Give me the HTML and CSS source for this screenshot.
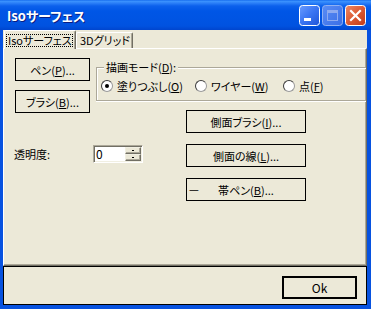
FILE: index.html
```html
<!DOCTYPE html>
<html lang="ja">
<head>
<meta charset="utf-8">
<link rel="stylesheet" href="styles.css">
</head>
<body>
<div class="window">
  <div class="titlebar">
    <span class="title">Isoサーフェス</span>
    <div class="tb-buttons">
      <svg class="tb-btn" width="21" height="21" viewBox="0 0 21 21">
        <defs><linearGradient id="gmin" x1="0" y1="0" x2="1" y2="1"><stop offset="0" stop-color="#6A9CFF"/><stop offset="0.5" stop-color="#3A74F2"/><stop offset="1" stop-color="#1F55D8"/></linearGradient></defs>
        <rect x="0.5" y="0.5" width="20" height="20" rx="3" fill="url(#gmin)" stroke="#fff"/>
        <rect x="5" y="13" width="7" height="3" fill="#fff"/>
      </svg>
      <svg class="tb-btn" width="21" height="21" viewBox="0 0 21 21">
        <defs><linearGradient id="gmax" x1="0" y1="0" x2="1" y2="1"><stop offset="0" stop-color="#5A8DF5"/><stop offset="1" stop-color="#3A6EE6"/></linearGradient></defs>
        <rect x="0.5" y="0.5" width="20" height="20" rx="3" fill="url(#gmax)" stroke="#8FB0F2"/>
        <rect x="5.5" y="5.5" width="10" height="10" fill="none" stroke="#8DAAF0"/>
        <rect x="5" y="5" width="11" height="3" fill="#8DAAF0"/>
      </svg>
      <svg class="tb-btn" width="21" height="21" viewBox="0 0 21 21">
        <defs><linearGradient id="gcl" x1="0" y1="0" x2="1" y2="1"><stop offset="0" stop-color="#EE8A66"/><stop offset="0.5" stop-color="#DC5A33"/><stop offset="1" stop-color="#C23A17"/></linearGradient></defs>
        <rect x="0.5" y="0.5" width="20" height="20" rx="3" fill="url(#gcl)" stroke="#fff"/>
        <path d="M6 6 L15 15 M15 6 L6 15" stroke="#fff" stroke-width="2.2" stroke-linecap="square"/>
      </svg>
    </div>
  </div>
  <div class="frame">
    <div class="tabs">
      <div class="tab active"><span class="focus">Isoサーフェス</span></div>
      <div class="tab">3Dグリッド</div>
    </div>
    <div class="panel">
      <div class="col-left">
        <button class="btn">ペン(<u>P</u>)...</button>
        <button class="btn">ブラシ(<u>B</u>)...</button>
        <div class="alpha-row">
          <span class="alpha-label">透明度:</span>
          <span class="spin">
            <span class="spin-value">0</span>
            <span class="spin-btns"><span class="spin-btn"></span><span class="spin-btn"></span></span>
          </span>
        </div>
      </div>
      <div class="col-right">
        <div class="group">
          <span class="legend">描画モード(<u>D</u>):</span>
          <div class="radios">
            <span class="radio r1"><span class="dot checked"></span><span>塗りつぶし(<u>O</u>)</span></span>
            <span class="radio r2"><span class="dot"></span><span>ワイヤー(<u>W</u>)</span></span>
            <span class="radio r3"><span class="dot"></span><span>点(<u>F</u>)</span></span>
          </div>
        </div>
        <div class="side-buttons">
          <button class="btn wide">側面ブラシ(<u>I</u>)...</button>
          <button class="btn wide">側面の線(<u>L</u>)...</button>
          <button class="btn wide"><span class="dash">—</span>帯ペン(<u>B</u>)...</button>
        </div>
      </div>
    </div>
    <div class="footer">
      <button class="btn default">Ok</button>
    </div>
  </div>
</div>
</body>
</html>
```

FILE: styles.css
```css
* { box-sizing: border-box; margin: 0; padding: 0; }
html, body { width: 371px; height: 309px; overflow: hidden; }
body {
  font-family: "Noto Sans CJK JP", sans-serif;
  font-size: 11px;
  font-feature-settings: "palt";
  color: #000;
  background: #ECE9D8;
}
u { text-decoration: underline; text-underline-offset: 1px; }

.window { width: 371px; height: 309px; display: flex; flex-direction: column; }

.titlebar {
  height: 30px;
  flex: none;
  display: flex;
  align-items: center;
  padding: 0 5px 0 7px;
  background: linear-gradient(#0A5FE8 0px, #3D95FF 1px, #2C80F8 3px, #0B60EC 6px, #0056E6 11px, #0054E3 20px, #0052E0 26px, #0045CE 30px);
}
.title {
  flex: 1;
  color: #fff;
  font-weight: bold;
  font-size: 13px;
  line-height: 15px;
  text-shadow: 1px 1px 0 #0A1E82;
  padding-top: 1px;
}
.tb-buttons { display: flex; gap: 2px; }
.tb-btn { display: block; }

.frame {
  flex: 1;
  display: flex;
  flex-direction: column;
  background: #ECE9D8;
  border-left: 3px solid #0752E0;
  border-right: 4px solid #0752E0;
  border-bottom: 4px solid #0752E0;
}

.tabs { height: 18px; display: flex; align-items: flex-end; padding-left: 1px; position: relative; z-index: 2; }
.tab {
  height: 16px;
  padding: 0 4px;
  line-height: 15px;
  border-top: 1px solid #fff;
  border-left: 1px solid #fff;
  border-right: 1px solid #716F64;
  box-shadow: inset -1px 0 #ACA899;
  border-radius: 2px 2px 0 0;
  background: #ECE9D8;
  white-space: nowrap;
}
.tab.active {
  height: 19px;
  margin-bottom: -1px;
  width: 72px;
  padding: 2px 0 0 1px;
}
.tab + .tab { width: 57px; padding-left: 3px; }
.focus {
  display: inline-block;
  border: 1px dotted #000;
  height: 13px;
  line-height: 11px;
  padding: 0 1px;
  width: 67px;
}

.panel {
  height: 218px;
  flex: none;
  display: flex;
  padding: 9px 0 0 11px;
  border-top: 1px solid #fff;
  border-left: 1px solid #fff;
  border-right: 1px solid #716F64;
  border-bottom: 1px solid #716F64;
  box-shadow: inset -1px -1px #ACA899;
  overflow: hidden;
  position: relative;
  z-index: 1;
}

.btn {
  font: inherit;
  font-feature-settings: "palt";
  width: 75px;
  height: 23px;
  border: 1px solid #000;
  background: #ECE9D8;
  color: #000;
  line-height: 20px;
  text-align: center;
  display: block;
  position: relative;
}
.btn.wide { width: 120px; }
.dash { position: absolute; left: 2px; top: 0; }

.col-left { width: 81px; flex: none; display: flex; flex-direction: column; gap: 9px; }
.alpha-row { display: flex; align-items: center; margin-top: 23px; white-space: nowrap; }
.alpha-label { width: 78px; flex: none; margin-left: -1px; margin-right: 1px; }
.spin {
  width: 50px;
  height: 18px;
  flex: none;
  display: flex;
  background: #fff;
  border-top: 1px solid #ACA899;
  border-left: 1px solid #ACA899;
  border-right: 1px solid #fff;
  border-bottom: 1px solid #fff;
  box-shadow: inset 1px 1px #716F64, inset -1px -1px #F1EFE2;
}
.spin-value { flex: 1; padding-left: 2px; line-height: 15px; font-size: 12px; }
.spin-btns { width: 17px; display: flex; flex-direction: column; padding: 1px 1px 1px 0; }
.spin-btn {
  flex: 1;
  background: #ECE9D8;
  border-top: 1px solid #F1EFE2;
  border-left: 1px solid #F1EFE2;
  border-right: 1px solid #716F64;
  border-bottom: 1px solid #716F64;
  box-shadow: inset -1px -1px #ACA899;
  position: relative;
}
.spin-btn::after {
  content: "";
  position: absolute;
  left: 6px;
  top: 2px;
  width: 2px;
  height: 1px;
  background: #000;
}

.col-right { flex: 1; display: flex; flex-direction: column; }
.group {
  margin-top: 9px;
  height: 34px;
  position: relative;
  border-top: 1px solid #ACA899;
  border-left: 1px solid #ACA899;
  border-bottom: 1px solid #ACA899;
  box-shadow: inset 1px 1px #fff, 0 1px #fff;
}
.legend {
  position: absolute;
  top: -8px;
  left: 7px;
  padding: 0 2px;
  line-height: 14px;
  background: #ECE9D8;
  white-space: nowrap;
}
.radios { display: flex; padding: 11px 0 0 4px; height: 32px; white-space: nowrap; }
.radio { display: flex; align-items: center; gap: 4px; height: 14px; line-height: 14px; }
.r1 { width: 94px; }
.r2 { width: 88px; }
.dot {
  width: 12px;
  height: 12px;
  border-radius: 50%;
  background: #fff;
  border: 1px solid #3C3C3C;
  border-right-color: #9A9A9A;
  border-bottom-color: #9A9A9A;
  position: relative;
  flex: none;
}
.dot.checked::after {
  content: "";
  position: absolute;
  left: 3px;
  top: 3px;
  width: 4px;
  height: 4px;
  border-radius: 50%;
  background: #000;
}

.side-buttons { margin: 9px 0 0 90px; display: flex; flex-direction: column; gap: 11px; }

.footer {
  flex: 1;
  border: 1px solid #000;
  display: flex;
  justify-content: flex-end;
  padding: 9px 9px 0 0;
}
.btn.default { border: 2px solid #000; line-height: 18px; font-size: 12px; }
```
